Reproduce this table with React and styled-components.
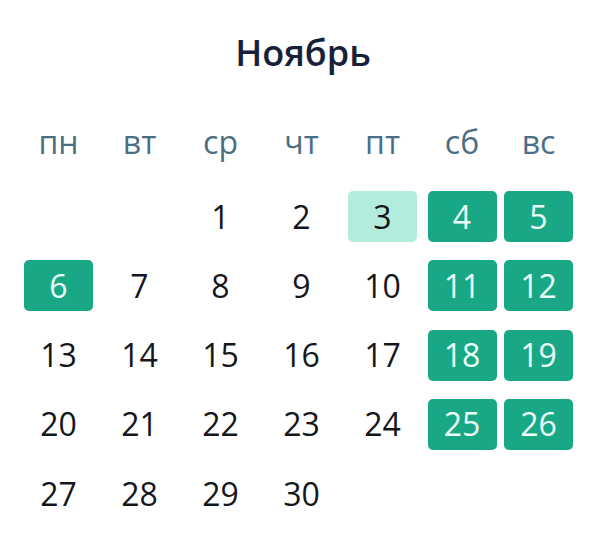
import React from "react";
import styled, { createGlobalStyle } from "styled-components";

const Global = createGlobalStyle`
  html, body { margin: 0; padding: 0; background: #ffffff; }
  body { font-family: "Open Sans", "Noto Sans", sans-serif; }
`;

const Wrap = styled.div`
  width: 604px;
  height: 550px;
  background: #fff;
  overflow: hidden;
`;

const Title = styled.h1`
  margin: 29px 0 0;
  padding-left: 2px;
  text-align: center;
  font-size: 36px;
  line-height: 48px;
  font-weight: 600;
  color: #17213a;
`;

const Grid = styled.div`
  display: grid;
  grid-template-columns: 81px 81px 81px 81px 81px 78px 75px;
  grid-auto-rows: 51px;
  row-gap: 18.3px;
  margin-left: 18px;
`;

const Head = styled(Grid)`
  margin-top: 41px;
  margin-bottom: 22px;
`;

const DayName = styled.div`
  display: flex;
  align-items: center;
  justify-content: center;
  font-size: 32px;
  color: #4a6f85;
  padding-bottom: 4px;
`;

const Cell = styled.div`
  display: flex;
  justify-content: center;
`;

const Day = styled.div`
  width: 69px;
  height: 51px;
  border-radius: 5px;
  display: flex;
  align-items: center;
  justify-content: center;
  font-size: 32px;
  font-weight: ${(p) => (p.$kind === "off" ? 500 : 400)};
  padding-bottom: 1px;
  box-sizing: border-box;
  background: ${(p) =>
    p.$kind === "off" ? "#19a886" : p.$kind === "short" ? "#b3ecdc" : "transparent"};
  color: ${(p) => (p.$kind === "off" ? "#ecfff8" : "#15161c")};
`;

const names = ["пн", "вт", "ср", "чт", "пт", "сб", "вс"];
const off = new Set([4, 5, 6, 11, 12, 18, 19, 25, 26]);

export default function App() {
  const cells = [];
  for (let i = 0; i < 2; i++) cells.push(null);
  for (let d = 1; d <= 30; d++) cells.push(d);
  return (
    <Wrap>
      <Global />
      <Title>Ноябрь</Title>
      <Head>
        {names.map((n) => (
          <DayName key={n}>{n}</DayName>
        ))}
      </Head>
      <Grid>
        {cells.map((d, i) => (
          <Cell key={i}>
            {d && (
              <Day $kind={off.has(d) ? "off" : d === 3 ? "short" : "work"}>{d}</Day>
            )}
          </Cell>
        ))}
      </Grid>
    </Wrap>
  );
}
